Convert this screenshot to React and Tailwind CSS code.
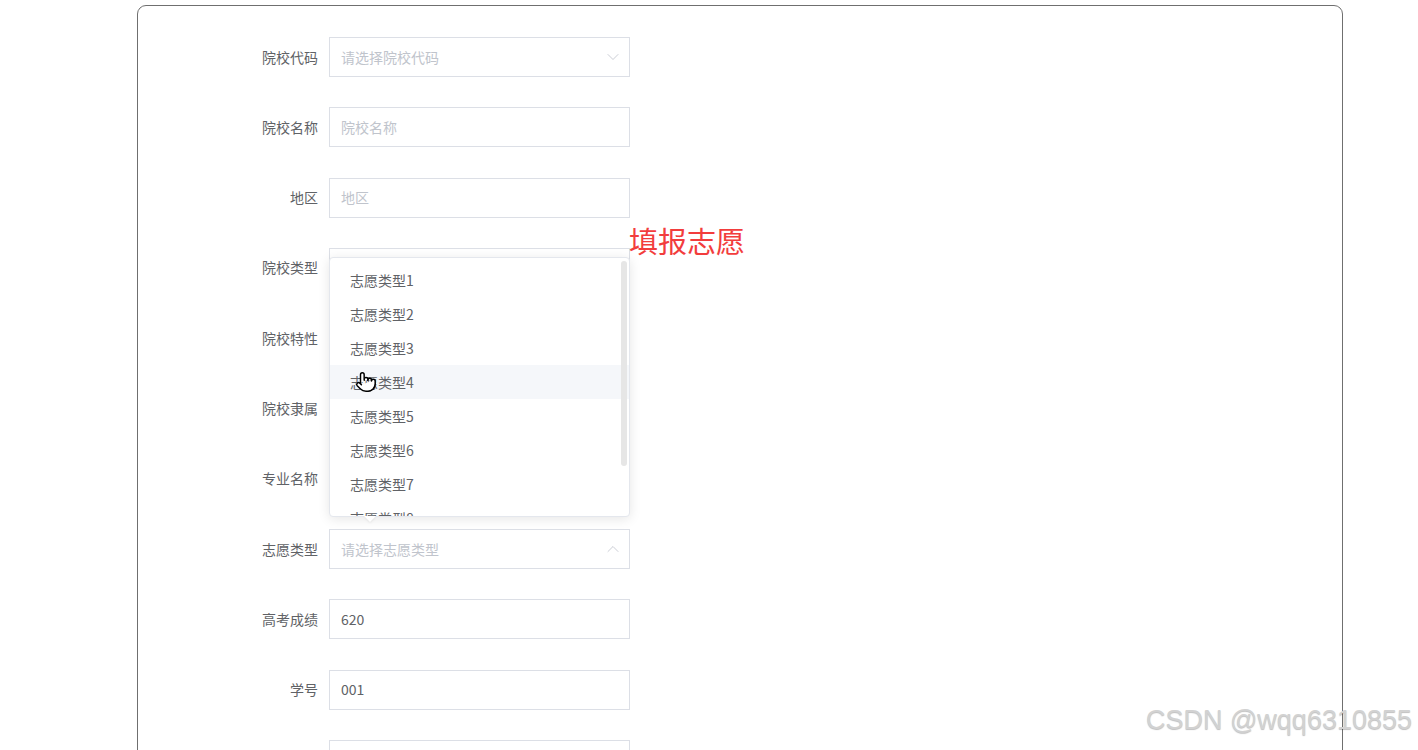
import React from 'react';
import { ChevronDown, ChevronUp, Pointer } from 'lucide-react';

const fields = [
    { label: '院校代码', type: 'select', placeholder: '请选择院校代码' },
    { label: '院校名称', placeholder: '院校名称' },
    { label: '地区', placeholder: '地区' },
    { label: '院校类型', type: 'select', placeholder: '' },
    { label: '院校特性', placeholder: '' },
    { label: '院校隶属', placeholder: '' },
    { label: '专业名称', placeholder: '' },
    { label: '志愿类型', type: 'select', placeholder: '请选择志愿类型', open: true },
    { label: '高考成绩', value: '620' },
    { label: '学号', value: '001' },
    { label: '', placeholder: '' },
];

const options = [1, 2, 3, 4, 5, 6, 7, 8];

const FormRow = ({ field }) => {
    const Arrow = field.open ? ChevronUp : ChevronDown;
    return (
        <div className="flex items-center h-[40px]">
            <label className="w-[191px] pr-[11px] text-right text-[14px] text-[#606266]">{field.label}</label>
            <div className="flex items-center w-[301px] h-[40px] border border-[#dcdfe6] bg-white pl-[11px] pr-[6px] text-[14px]">
                {field.value ? (
                    <span className="text-[#606266]">{field.value}</span>
                ) : (
                    <span className="text-[#c0c4cc]">{field.placeholder}</span>
                )}
                {field.type === 'select' && (
                    <Arrow size={20} strokeWidth={1} className="ml-auto text-[#c0c4cc]" />
                )}
            </div>
        </div>
    );
};

const App = () => {
    return (
        <div className="relative w-[1418px] h-[750px] overflow-hidden bg-white font-['Microsoft_YaHei','Noto_Sans_CJK_SC',sans-serif]">
            {/* Card */}
            <div className="ml-[137px] mt-[5px] w-[1206px] h-[800px] border border-[#6f6f6f] rounded-[9px]">
                <div className="relative pt-[31px] flex flex-col gap-y-[30.3px]">
                    {fields.map((f, i) => (
                        <FormRow key={i} field={f} />
                    ))}

                    {/* Title */}
                    <div className="absolute left-[491px] top-[220px] text-[29px] leading-none text-[#f23d3d]">填报志愿</div>

                    {/* Dropdown menu */}
                    <div className="absolute left-[191px] top-[251px] w-[301px] h-[260px] bg-white border border-[#e4e7ed] rounded-[4px] shadow-[0_2px_12px_rgba(0,0,0,0.1)]">
                        <div className="h-full overflow-hidden rounded-[4px] pt-[5px]">
                            {options.map((n) => (
                                <div
                                    key={n}
                                    className={`h-[34px] flex items-center px-[20px] text-[14px] text-[#606266] ${
                                        n === 4 ? 'bg-[#f5f7fa]' : ''
                                    }`}
                                >
                                    志愿类型{n}
                                </div>
                            ))}
                        </div>
                        {/* scrollbar */}
                        <div className="absolute right-[2px] top-[3px] w-[6px] h-[205px] rounded-full bg-[#e6e6e6]" />
                        {/* arrow */}
                        <div className="absolute left-[34px] -bottom-[6px] w-0 h-0 border-x-[6px] border-x-transparent border-t-[6px] border-t-white drop-shadow-[0_1px_1px_rgba(0,0,0,0.08)]" />
                        {/* cursor */}
                        <Pointer
                            size={22}
                            strokeWidth={1.6}
                            className="absolute left-[25px] top-[113px] text-black fill-white"
                        />
                    </div>
                </div>
            </div>

            {/* Watermark */}
            <div className="absolute right-[6px] bottom-[10px] font-['Liberation_Sans',Arial,sans-serif] text-[27px] text-[#d2d2d2] [text-shadow:0_1px_1px_rgba(0,0,0,0.25)]">
                CSDN @wqq6310855
            </div>
        </div>
    );
};

export default App;
